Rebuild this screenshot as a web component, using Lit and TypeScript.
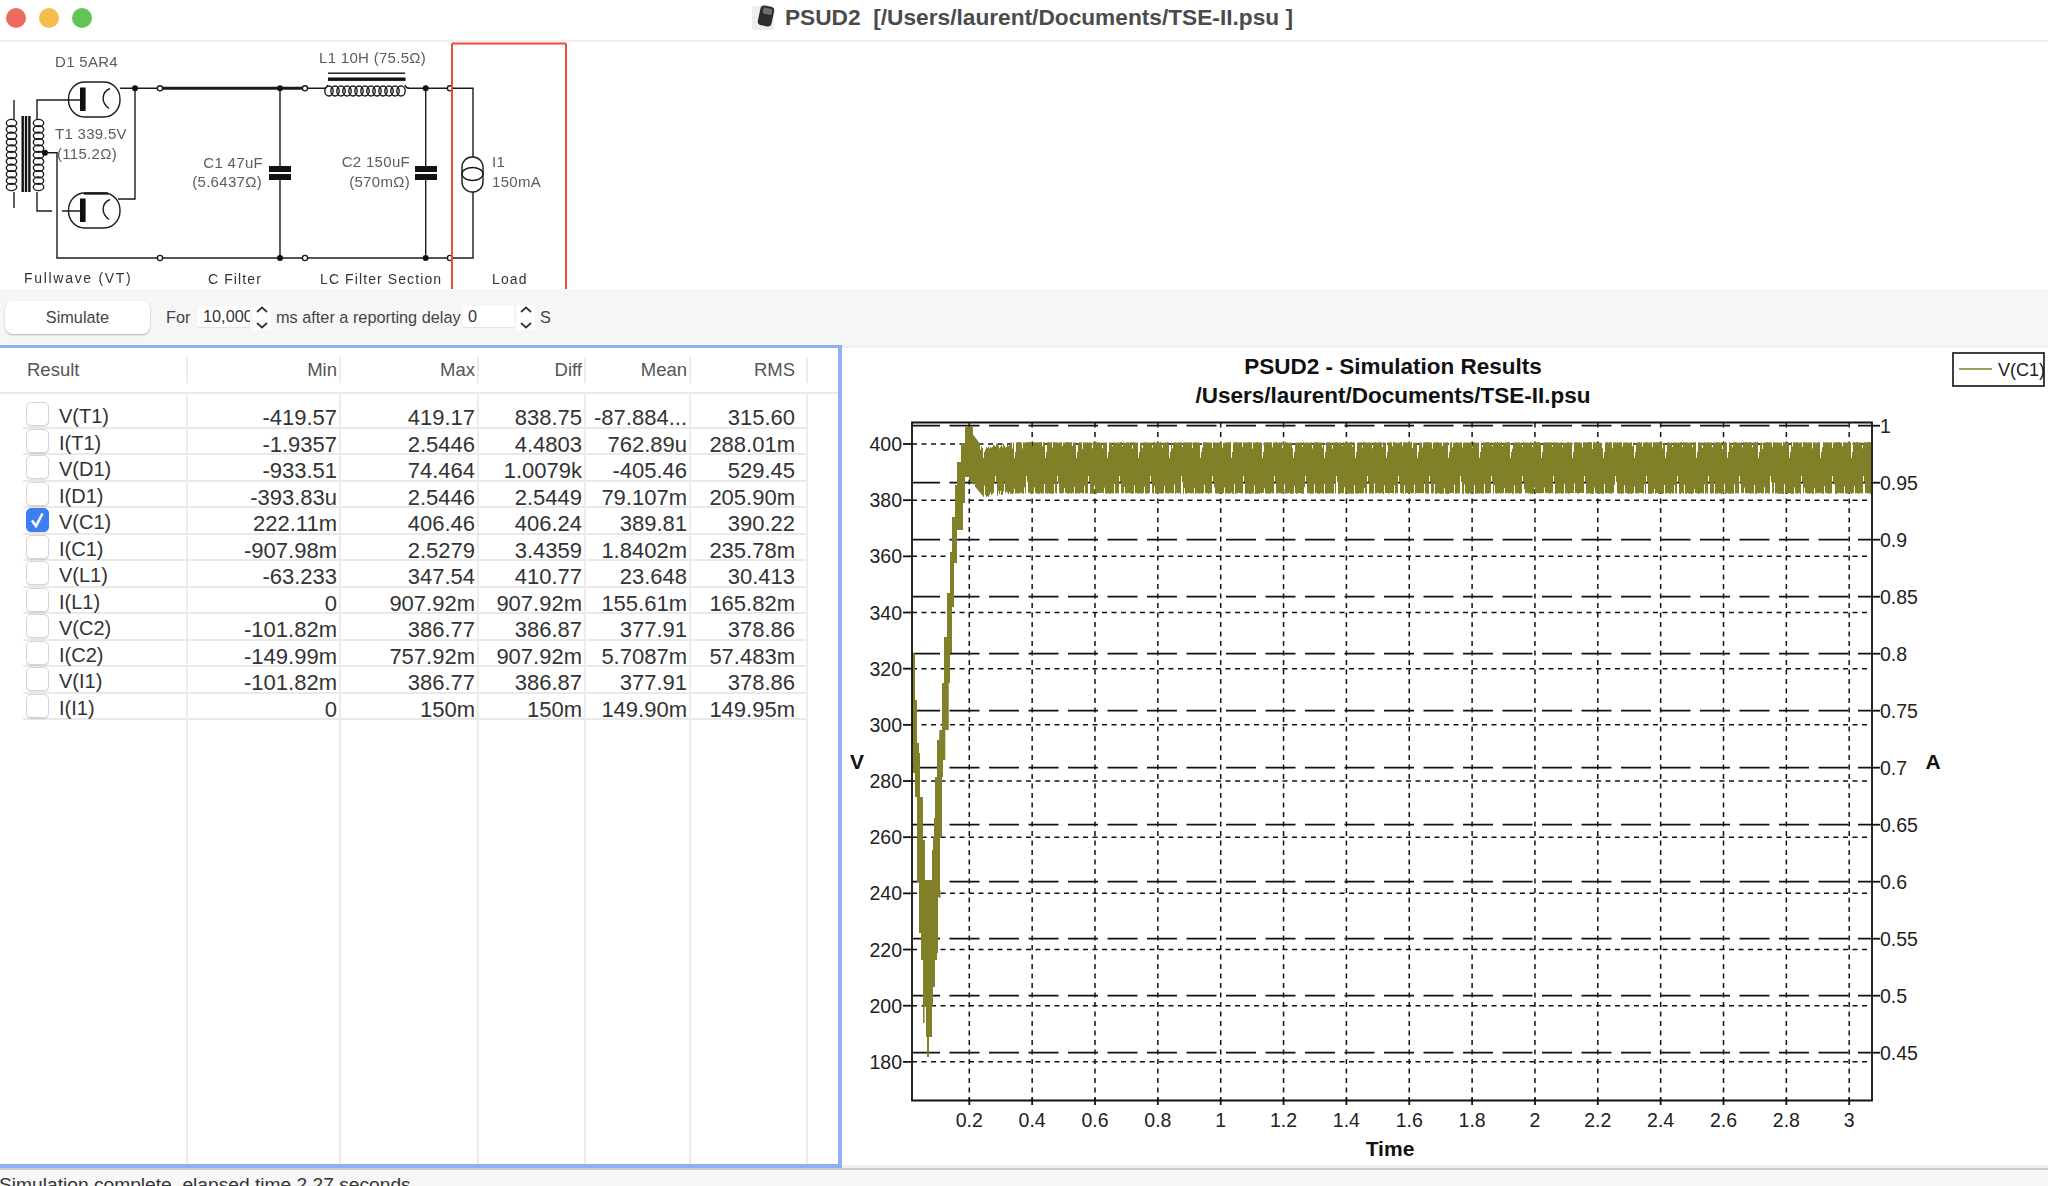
import { LitElement, css, html, svg } from 'lit';
import { customElement } from 'lit/decorators.js';

const OLIVE = '#817f28';

type Row = [string, string, string, string, string, string, boolean?];

const ROWS: Row[] = [
  ['V(T1)', '-419.57', '419.17', '838.75', '-87.884...', '315.60'],
  ['I(T1)', '-1.9357', '2.5446', '4.4803', '762.89u', '288.01m'],
  ['V(D1)', '-933.51', '74.464', '1.0079k', '-405.46', '529.45'],
  ['I(D1)', '-393.83u', '2.5446', '2.5449', '79.107m', '205.90m'],
  ['V(C1)', '222.11m', '406.46', '406.24', '389.81', '390.22', true],
  ['I(C1)', '-907.98m', '2.5279', '3.4359', '1.8402m', '235.78m'],
  ['V(L1)', '-63.233', '347.54', '410.77', '23.648', '30.413'],
  ['I(L1)', '0', '907.92m', '907.92m', '155.61m', '165.82m'],
  ['V(C2)', '-101.82m', '386.77', '386.87', '377.91', '378.86'],
  ['I(C2)', '-149.99m', '757.92m', '907.92m', '5.7087m', '57.483m'],
  ['V(I1)', '-101.82m', '386.77', '386.87', '377.91', '378.86'],
  ['I(I1)', '0', '150m', '150m', '149.90m', '149.95m'],
];

// x0, x1, top, bottom of the start-up part of the trace, read off the reference
const STARTUP: number[][] = [
  [912, 915, 653, 700], [912, 917, 700, 745], [913, 919, 743, 773], [915, 920, 753, 797],
  [917, 923, 797, 840], [917, 925, 840, 882], [919, 937, 880, 933], [921, 937, 933, 960],
  [923, 935, 960, 987], [924, 933, 987, 1007], [926, 932, 1007, 1037], [927, 929, 1037, 1057],
  [923, 924.5, 980, 1023], [932, 938, 850, 953], [933, 940, 837, 897], [935, 942, 777, 837],
  [934, 935.5, 818, 840], [939, 940.5, 890, 898], [937, 943, 740, 777], [939.3, 945.3, 730, 760],
  [942, 948.7, 683, 730], [942.5, 944, 720, 735], [944, 950, 637, 683], [947, 952, 593, 653],
  [950, 954, 552, 607], [952, 957, 517, 563], [955, 963, 485, 530], [957, 965, 462, 503],
  [961, 970, 443, 477], [965, 973, 427, 470],
];

const noise = (n: number) => {
  const s = Math.sin(n * 12.9898) * 43758.5453;
  return s - Math.floor(s);
};

function tracePath() {
  let d = '';
  for (const [a, b, t, c] of STARTUP) d += `M${a} ${t}H${b}V${c}H${a}Z`;
  return d;
}

function ripplePath() {
  let d = '';
  for (let x = 969; x <= 1870; x++) {
    const i = x - 969;
    let top = 442 + noise(i) * 0.8;
    let bot = 494 - noise(i + 500) * 1.2;
    if (x < 1010) {
      const k = (1010 - x) / 41;
      top = x < 980 ? 430 + (x - 969) * 1.3 : 442 + k * 5 + noise(i) * 5;
      bot = x < 985 ? 480 + (x - 969) * 1.2 : 494 + k * 6 - noise(i + 500) * 5;
    }
    if (i % 31 === 14) top = 458;
    else if (i % 31 === 15) top = 452;
    else if (i % 10 === 3) top = 446 + noise(i + 9) * 3;
    if (i % 31 === 26) bot = 476;
    else if (i % 31 === 27) bot = 482;
    else if (i % 10 === 5) bot = 482 + noise(i + 77) * 7;
    d += `M${x + 0.5} ${top.toFixed(1)}V${bot.toFixed(1)}`;
  }
  return d;
}

function coil(x: number, y0: number, y1: number) {
  const out = [];
  for (let y = y0; y <= y1; y += 6.4) {
    out.push(svg`<ellipse cx=${x} cy=${y} rx="5.2" ry="3.6"></ellipse>`);
  }
  return out;
}

function tube(cy: number) {
  return svg`
    <rect x="68.5" y=${cy - 17.5} width="51.5" height="35" rx="16" ry="17"></rect>
    <rect class="solid" x="80" y=${cy - 12} width="5.6" height="23.5"></rect>
    <path d="M110 ${cy - 11}C101 ${cy - 7} 101 ${cy + 3} 109 ${cy + 9}"></path>
  `;
}

@customElement('app-root')
export class AppRoot extends LitElement {
  static styles = css`
    :host {
      display: flex;
      flex-direction: column;
      width: 2048px;
      height: 1186px;
      overflow: hidden;
      background: #fff;
      font-family: 'Liberation Sans', Arial, sans-serif;
      color: #333;
    }
    .titlebar {
      position: relative;
      height: 42px;
      flex: none;
      display: flex;
      align-items: center;
      justify-content: center;
      gap: 8px;
      border-bottom: 2px solid #f1f1f1;
      box-sizing: border-box;
      padding: 0 4px 6px 0;
      font-size: 22.7px;
      font-weight: 700;
      color: #4b4b4b;
      white-space: pre;
    }
    .lights {
      position: absolute;
      left: 6px;
      top: 8px;
      display: flex;
      gap: 13px;
    }
    .lights i {
      width: 20px;
      height: 20px;
      border-radius: 50%;
    }
    .lights .red {
      background: #ee6a5f;
    }
    .lights .yellow {
      background: #f5bd4f;
    }
    .lights .green {
      background: #61c454;
    }
    .schematic {
      height: 247px;
      flex: none;
      display: block;
    }
    .schematic svg {
      display: block;
      filter: blur(0.45px);
    }
    .schematic .wires {
      fill: none;
      stroke: #1c1c1c;
      stroke-width: 1.4;
    }
    .schematic .solid {
      fill: #111;
      stroke: none;
    }
    .schematic .open {
      fill: #fff;
    }
    .schematic text {
      font-size: 15px;
      fill: #5c5c5c;
      stroke: none;
      letter-spacing: 0.3px;
    }
    .schematic text.cap {
      font-size: 14px;
      fill: #333;
      letter-spacing: 1.1px;
    }
    .schematic text.cap.wide {
      letter-spacing: 1.7px;
    }
    .toolbar {
      height: 56px;
      flex: none;
      display: flex;
      align-items: center;
      background: #f6f6f6;
      font-size: 16.3px;
      box-sizing: border-box;
      padding: 0 0 0 5px;
      color: #444;
    }
    .simulate {
      width: 145px;
      height: 33px;
      margin-right: 16px;
      border: 0;
      border-radius: 8px;
      background: #fff;
      box-shadow: 0 1px 2px rgba(0, 0, 0, 0.28);
      font: 16.3px 'Liberation Sans', Arial, sans-serif;
      color: #444;
    }
    .for {
      width: 32px;
    }
    .delay {
      width: 187px;
      white-space: nowrap;
    }
    .field {
      height: 22px;
      padding: 0 0 0 5px;
      border: 0;
      border-bottom: 1px solid #e4e4e4;
      background: #fff;
      font: 16.3px 'Liberation Sans', Arial, sans-serif;
      color: #333;
      box-sizing: border-box;
      outline: none;
    }
    .field.ms {
      width: 52px;
    }
    .field.sec {
      width: 51px;
    }
    .spin {
      width: 18px;
      height: 25px;
      margin: 0 5px 0 3px;
      background: #fff;
      display: block;
    }
    .main {
      flex: 1;
      display: flex;
      min-height: 0;
    }
    .results {
      width: 842px;
      flex: none;
      box-sizing: border-box;
      border: 4px solid #8fb0f5;
      border-width: 3px 4px 4px 0;
      display: flex;
      flex-direction: column;
    }
    .cols {
      display: grid;
      grid-template-columns: 165px 153px 138px 107px 105px 117px;
      margin-left: 23px;
      width: 785px;
    }
    .cols > div {
      box-sizing: border-box;
      border-right: 2px solid #ececec;
      padding-right: 2px;
      text-align: right;
      white-space: nowrap;
    }
    .cols > div:last-child {
      padding-right: 11px;
    }
    .cols > div:first-child {
      text-align: left;
      padding-right: 0;
      padding-left: 3px;
    }
    .head {
      flex: none;
      height: 44px;
      border-bottom: 2px solid #e9e9e9;
      display: flex;
      box-sizing: content-box;
    }
    .head .cols {
      height: 26px;
      margin-top: 9px;
      font-size: 18.5px;
      line-height: 26px;
      color: #555;
    }
    .head .cols > div:first-child {
      padding-left: 4px;
    }
    .spacer {
      flex: none;
      height: 8px;
    }
    .row {
      height: 26.5px;
      box-sizing: border-box;
      border-bottom: 2px solid #e9e9e9;
      font-size: 22px;
      line-height: 26px;
      color: #333;
    }
    .row > div {
      height: 26.5px;
      padding-top: 3px;
      margin-bottom: -2px;
    }
    .row .name {
      display: flex;
      align-items: flex-start;
      gap: 10px;
      padding-top: 0;
      font-size: 20px;
    }
    .name span {
      margin-top: 1px;
    }
    .name .box {
      width: 23px;
      height: 24px;
      margin-top: 0;
      flex: none;
      box-sizing: border-box;
      border: 1px solid #d6d6d6;
      border-radius: 5px;
      background: #fff;
      box-shadow: 0 1px 1px rgba(0, 0, 0, 0.12);
      display: block;
    }
    .name .box.on {
      background: #3b7ff3;
      border-color: #3b7ff3;
    }
    .fill {
      flex: 1;
    }
    .plot {
      flex: 1;
      min-width: 0;
      border-top: 3px solid #f0f0f0;
      border-bottom: 3px solid #f0f0f0;
    }
    .plot svg {
      display: block;
      margin-top: -3px;
    }
    .plot text {
      font-size: 19.5px;
      fill: #222;
    }
    .plot text.legend {
      font-size: 18px;
    }
    .plot text.bold {
      font-size: 21px;
      font-weight: 700;
      fill: #111;
    }
    .plot text.bold.title {
      font-size: 22.5px;
    }
    .status {
      height: 16px;
      flex: none;
      border-top: 2px solid #c9c9c9;
      background: #f7f7f7;
      font-size: 19.2px;
      line-height: 29px;
      text-indent: -1px;
      overflow: hidden;
      white-space: nowrap;
    }
  `;

  renderSchematic() {
    return html`<div class="schematic">
      <svg width="580" height="247" viewBox="0 42 580 247">
        <g class="wires">
          <path d="M120 88.3H160M135 88.3V199H118M308 88.3H325M408 88.3H447M453 88.3H473V157M473 192V258H453M447 258H428M428 258H308M302 258H163M157 258H57V152.7H45"></path>
          <path d="M163 88.3H302" stroke-width="3"></path>
          <path d="M280 88V166M280 180V258M425.7 88V166M425.7 180V258"></path>
          <path d="M68 100H37V120M37 192V211H52M62 211H80M80 100H68M14 100V120M14 192V208"></path>
          ${tube(99.5)}
          ${tube(210.5)}
          <path d="M84 193.5H108" stroke-width="2.4"></path>
          ${coil(11.5, 123, 190)}
          ${coil(38.5, 123, 190)}
          <rect class="solid" x="21.5" y="116" width="2.4" height="76"></rect>
          <rect class="solid" x="24.8" y="116" width="2.4" height="76"></rect>
          <rect class="solid" x="28.2" y="116" width="2.4" height="76"></rect>
          ${Array.from({ length: 13 }, (_, i) => svg`<ellipse cx=${329 + i * 6} cy="91" rx="4.2" ry="5"></ellipse>`)}
          <path d="M325 88.3C327 88 327 86 328 85M405 85C405.5 87 406 88 409 88.3"></path>
          <rect class="solid" x="328" y="72.5" width="77" height="1.4"></rect>
          <rect class="solid" x="328" y="77.5" width="77.5" height="3.4"></rect>
          <rect class="solid" x="269" y="166" width="22" height="6"></rect>
          <rect class="solid" x="269" y="174" width="22" height="6"></rect>
          <rect class="solid" x="415" y="166" width="22" height="6"></rect>
          <rect class="solid" x="415" y="174" width="22" height="6"></rect>
          <rect x="462" y="157" width="21" height="35" rx="10"></rect>
          <ellipse cx="472.5" cy="174" rx="10.5" ry="6.5"></ellipse>
          ${[[135, 88.3], [280, 88.3], [425.7, 88.3], [280, 258], [425.7, 258], [45, 152.7]].map(
            ([x, y]) => svg`<circle class="solid" cx=${x} cy=${y} r="3"></circle>`,
          )}
          ${[[160, 88.3], [305, 88.3], [450, 88.3], [160, 258], [305, 258], [450, 258]].map(
            ([x, y]) => svg`<circle class="open" cx=${x} cy=${y} r="2.6"></circle>`,
          )}
          <path d="M452 43.5V289M566 43.5V289M452 43.5H566" stroke="#ec4b40" stroke-width="2"></path>
        </g>
        <text x="55" y="67">D1 5AR4</text>
        <text x="55" y="139">T1 339.5V</text>
        <text x="57" y="159">(115.2Ω)</text>
        <text x="319" y="63">L1 10H (75.5Ω)</text>
        <text x="263" y="168" text-anchor="end">C1 47uF</text>
        <text x="262" y="187" text-anchor="end">(5.6437Ω)</text>
        <text x="410" y="167" text-anchor="end">C2 150uF</text>
        <text x="410" y="187" text-anchor="end">(570mΩ)</text>
        <text x="492" y="167">I1</text>
        <text x="492" y="187">150mA</text>
        <text class="cap wide" x="24" y="283">Fullwave (VT)</text>
        <text class="cap" x="208" y="284">C Filter</text>
        <text class="cap" x="320" y="284">LC Filter Section</text>
        <text class="cap" x="492" y="284">Load</text>
      </svg>
    </div>`;
  }

  renderSpin() {
    return html`<svg class="spin" viewBox="0 0 18 25" fill="none" stroke="#333" stroke-width="1.7">
      <path d="M4 7L9 2.5L14 7M4 18L9 22.5L14 18"></path>
    </svg>`;
  }

  renderToolbar() {
    return html`<div class="toolbar">
      <button class="simulate">Simulate</button>
      <span class="for">For</span>
      <input class="field ms" value="10,000" />
      ${this.renderSpin()}
      <span class="delay">ms after a reporting delay</span>
      <input class="field sec" value="0" />
      ${this.renderSpin()}
      <span>S</span>
    </div>`;
  }

  renderResults() {
    const blank = html`<div></div><div></div><div></div><div></div><div></div><div></div>`;
    return html`<div class="results">
      <div class="head">
        <div class="cols">
          <div>Result</div><div>Min</div><div>Max</div><div>Diff</div><div>Mean</div><div>RMS</div>
        </div>
      </div>
      <div class="cols spacer">${blank}</div>
      ${ROWS.map(
        (r) => html`<div class="cols row">
          <div class="name">
            <span class="box ${r[6] ? 'on' : ''}">
              ${r[6]
                ? html`<svg width="21" height="22" viewBox="0 0 21 22" fill="none" stroke="#fff" stroke-width="2.6">
                    <path d="M5 11.5L9 17L15.5 4.5"></path>
                  </svg>`
                : ''}
            </span>
            <span>${r[0]}</span>
          </div>
          <div>${r[1]}</div><div>${r[2]}</div><div>${r[3]}</div><div>${r[4]}</div><div>${r[5]}</div>
        </div>`,
      )}
      <div class="cols fill">${blank}</div>
    </div>`;
  }

  renderPlot() {
    const ax = 912;
    const bx = 1872;
    const ty = 422.5;
    const by = 1100.5;
    const xs = Array.from({ length: 15 }, (_, i) => ({
      x: 969.3 + i * 62.85,
      label: String(Math.round((i + 1) * 2) / 10),
    }));
    const ls = Array.from({ length: 12 }, (_, i) => ({ y: 444 + i * 56.17, label: String(400 - i * 20) }));
    const rs = Array.from({ length: 12 }, (_, i) => ({
      y: 425.7 + i * 57,
      label: String(Math.round((1 - i * 0.05) * 100) / 100),
    }));
    return html`<div class="plot">
      <svg width="1206" height="823" viewBox="842 345 1206 823">
        <defs>
          <clipPath id="legend-clip"><rect x="1952" y="353" width="92" height="33"></rect></clipPath>
        </defs>
        <text class="bold title" x="1393" y="374" text-anchor="middle">PSUD2 - Simulation Results</text>
        <text class="bold title" x="1393" y="403" text-anchor="middle">/Users/laurent/Documents/TSE-II.psu</text>
        <text class="bold" x="857" y="769" text-anchor="middle">V</text>
        <text class="bold" x="1933" y="769" text-anchor="middle">A</text>
        <text class="bold" x="1390" y="1156" text-anchor="middle">Time</text>

        <g fill="none" stroke="#111" stroke-width="1.5">
          ${xs.map((t) => svg`<path d="M${t.x} ${ty}V${by}" stroke-dasharray="5 4.5"></path>`)}
          ${ls.map((t) => svg`<path d="M${ax} ${t.y}H1868" stroke-dasharray="5 4.5"></path>`)}
          ${rs.map((t) => svg`<path d="M${ax} ${t.y}H${bx}" stroke-width="1.7" stroke-dasharray="30 9.5" stroke-dashoffset="2"></path>`)}
        </g>

        <path d=${tracePath()} fill=${OLIVE}></path>
        <path d=${ripplePath()} fill="none" stroke=${OLIVE} stroke-width="1"></path>

        <g fill="none" stroke="#111" stroke-width="1.8">
          <path d="M${ax} ${ty}H${bx}V${by}H${ax}Z"></path>
          ${ls.map((t) => svg`<path d="M903 ${t.y}H${ax}"></path>`)}
          ${rs.map((t) => svg`<path d="M${bx} ${t.y}H1880"></path>`)}
          ${xs.map((t) => svg`<path d="M${t.x} 1098V1105"></path>`)}
        </g>

        ${ls.map((t) => svg`<text x="902" y=${t.y + 7} text-anchor="end">${t.label}</text>`)}
        ${rs.map((t) => svg`<text x="1880" y=${t.y + 7}>${t.label}</text>`)}
        ${xs.map((t) => svg`<text x=${t.x} y="1127" text-anchor="middle">${t.label}</text>`)}

        <g clip-path="url(#legend-clip)">
          <text class="legend" x="1998" y="376">V(C1)</text>
        </g>
        <path d="M1959 369H1992" stroke=${OLIVE} stroke-width="1.5"></path>
        <rect x="1953" y="353" width="91" height="33" fill="none" stroke="#111" stroke-width="1.6"></rect>
      </svg>
    </div>`;
  }

  render() {
    return html`
      <div class="titlebar">
        <div class="lights">
          <i class="red"></i>
          <i class="yellow"></i>
          <i class="green"></i>
        </div>
        <svg width="26" height="28" viewBox="0 0 26 28">
          <rect x="1" y="3" width="22" height="24" fill="#eeeeee"></rect>
          <rect x="8" y="3" width="14" height="20" rx="4" fill="#2d2d2d" transform="rotate(12 15 13)"></rect>
          <rect x="11" y="5" width="9" height="6" rx="1" fill="#6f6f6f" transform="rotate(12 15 13)"></rect>
        </svg>
        <span>PSUD2  [/Users/laurent/Documents/TSE-II.psu ]</span>
      </div>
      ${this.renderSchematic()} ${this.renderToolbar()}
      <div class="main">${this.renderResults()} ${this.renderPlot()}</div>
      <div class="status">Simulation complete, elapsed time 2.27 seconds</div>
    `;
  }
}
